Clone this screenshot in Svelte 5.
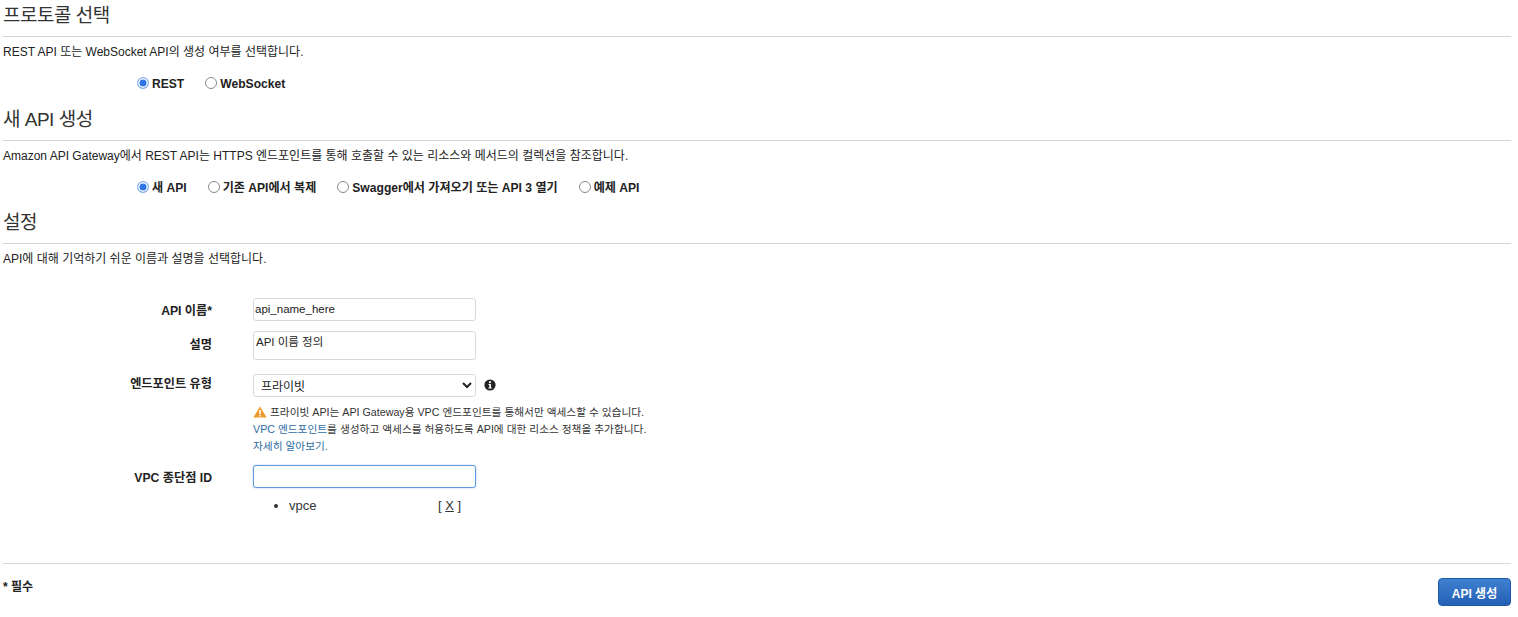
<script>
  let protocol = $state('rest');
  let apiMode = $state('new');
  let apiName = $state('api_name_here');
  let description = $state('API 이름 정의');
  let endpointType = $state('private');
  let vpcId = $state('');
  let vpcList = $state(['vpce']);

  const protocols = [
    { id: 'rest', label: 'REST' },
    { id: 'ws', label: 'WebSocket' }
  ];
  const apiModes = [
    { id: 'new', label: '새 API' },
    { id: 'clone', label: '기존 API에서 복제' },
    { id: 'swagger', label: 'Swagger에서 가져오기 또는 API 3 열기' },
    { id: 'example', label: '예제 API' }
  ];
</script>

<div class="page">
  <section class="sec">
    <h2>프로토콜 선택</h2>
    <p class="desc">REST API 또는 WebSocket API의 생성 여부를 선택합니다.</p>
    <div class="radios">
      {#each protocols as opt}
        <label class="radio"><input type="radio" name="protocol" value={opt.id} bind:group={protocol} />{opt.label}</label>
      {/each}
    </div>
  </section>

  <section class="sec">
    <h2>새 API 생성</h2>
    <p class="desc">Amazon API Gateway에서 REST API는 HTTPS 엔드포인트를 통해 호출할 수 있는 리소스와 메서드의 컬렉션을 참조합니다.</p>
    <div class="radios">
      {#each apiModes as opt}
        <label class="radio"><input type="radio" name="mode" value={opt.id} bind:group={apiMode} />{opt.label}</label>
      {/each}
    </div>
  </section>

  <section class="sec">
    <h2>설정</h2>
    <p class="desc">API에 대해 기억하기 쉬운 이름과 설명을 선택합니다.</p>
  </section>

  <div class="form">
    <div class="row r-name">
      <span class="lbl">API 이름*</span>
      <input class="field" type="text" bind:value={apiName} />
    </div>
    <div class="row r-desc">
      <span class="lbl">설명</span>
      <textarea class="field area" bind:value={description}></textarea>
    </div>
    <div class="row r-type">
      <span class="lbl">엔드포인트 유형</span>
      <div class="control">
        <div class="select-line">
          <select class="field sel" bind:value={endpointType}>
            <option value="private">프라이빗</option>
            <option value="regional">지역</option>
          </select>
          <svg class="info" viewBox="0 0 12 12" width="12" height="12" aria-hidden="true">
            <circle cx="6" cy="6" r="5.6" fill="#222" />
            <circle cx="6" cy="3.2" r="1.1" fill="#fff" />
            <path d="M4.5 5h2.5v3.6h.8v1H4.4v-1h.9V6h-.8z" fill="#fff" />
          </svg>
        </div>
        <div class="note">
          <div>
            <svg class="warn" viewBox="0 0 14 12" width="14" height="12" aria-hidden="true">
              <path d="M7 .4 13.7 11.6H.3z" fill="#eb9a2c" />
              <rect x="6.2" y="4" width="1.6" height="4.2" fill="#fff" />
              <rect x="6.2" y="9" width="1.6" height="1.5" fill="#fff" />
            </svg>
            프라이빗 API는 API Gateway용 VPC 엔드포인트를 통해서만 액세스할 수 있습니다.
          </div>
          <div><a href="#vpc">VPC 엔드포인트</a>를 생성하고 액세스를 허용하도록 API에 대한 리소스 정책을 추가합니다.</div>
          <div><a href="#more">자세히 알아보기.</a></div>
        </div>
      </div>
    </div>
    <div class="row r-vpc">
      <span class="lbl">VPC 종단점 ID</span>
      <div class="control">
        <input class="field focus" type="text" bind:value={vpcId} />
        <ul class="vpc-list">
          {#each vpcList as item}
            <li><span class="vpc-name">{item}</span><span class="remove">[ <u>X</u> ]</span></li>
          {/each}
        </ul>
      </div>
    </div>
  </div>

  <footer class="foot">
    <span class="required">* 필수</span>
    <button class="create" type="button">API 생성</button>
  </footer>
</div>

<style>
  :global(body) {
    margin: 0;
    background: #fff;
  }

  .page {
    padding: 0 7px 0 3px;
    font-family: "Liberation Sans", "Noto Sans CJK KR", sans-serif;
    font-size: 12px;
    color: #222;
  }

  .sec {
    height: 103.5px;
  }

  .sec:last-of-type {
    height: auto;
  }

  h2 {
    margin: 0;
    height: 36px;
    line-height: 31px;
    font-size: 19px;
    letter-spacing: -0.5px;
    font-weight: 400;
    color: #333;
    border-bottom: 1px solid #d5d5d5;
    box-sizing: content-box;
  }

  .desc {
    margin: 0;
    padding-top: 7px;
    line-height: 16px;
  }

  .radios {
    display: flex;
    gap: 21px;
    margin-top: 15px;
    padding-left: 134px;
    line-height: 18px;
    font-size: 12.1px;
  }

  .radio {
    display: flex;
    align-items: center;
    gap: 3px;
    font-weight: 700;
    color: #222;
  }

  .radio input {
    appearance: none;
    margin: 0 0 2px;
    width: 12px;
    height: 12px;
    border: 1px solid #8a8a8a;
    border-radius: 50%;
    background: #fff;
    box-sizing: border-box;
  }

  .radio input:checked {
    border: 1.5px solid #8db4ee;
    background: #2f74e6;
    box-shadow: inset 0 0 0 1.5px #fff;
  }

  .form {
    margin-top: 31px;
  }

  .row {
    display: grid;
    grid-template-columns: 209px 223px;
    column-gap: 41px;
    align-items: start;
  }

  .r-name {
    height: 33px;
  }

  .r-desc {
    height: 43px;
  }

  .r-type {
    height: 91px;
  }

  .lbl {
    font-size: 12.2px;
    font-weight: 700;
    text-align: right;
    line-height: 16px;
    padding-top: 5px;
    white-space: nowrap;
  }

  .r-desc .lbl {
    padding-top: 6px;
  }

  .r-type .lbl {
    padding-top: 2px;
  }

  .field {
    display: block;
    width: 223px;
    box-sizing: border-box;
    border: 1px solid #d9d9d9;
    border-radius: 3px;
    background: #fff;
    font: inherit;
    font-size: 11.5px;
    color: #222;
    outline: none;
  }

  input.field {
    height: 23px;
    padding: 0 1px 1px;
  }

  .area {
    height: 29px;
    padding: 1px 2px;
    resize: none;
  }

  .sel {
    height: 23px;
    padding: 2px 3px 0;
    font-size: 12px;
  }

  .focus {
    border-color: #5f9ae0;
    box-shadow: 0 0 2px #a9c8ee;
  }

  .control {
    min-width: 0;
  }

  .select-line {
    position: relative;
  }

  .info {
    position: absolute;
    left: 231px;
    top: 5px;
  }

  .note {
    margin-top: 7px;
    width: 420px;
    font-size: 10.7px;
    line-height: 17px;
    color: #333;
    white-space: nowrap;
  }

  .warn {
    vertical-align: -2px;
  }

  a {
    color: #2e6da4;
    text-decoration: none;
  }

  .vpc-list {
    margin: 9px 0 0;
    padding: 0 0 0 36px;
    font-size: 13px;
    line-height: 18px;
    color: #333;
  }

  .vpc-name {
    display: inline-block;
    width: 149px;
  }

  .remove {
    white-space: pre;
  }

  .foot {
    display: flex;
    justify-content: space-between;
    align-items: flex-start;
    margin-top: 48px;
    border-top: 1px solid #d9d9d9;
    padding-top: 14px;
  }

  .required {
    font-size: 12px;
    font-weight: 700;
    line-height: 16px;
    margin-top: 1px;
  }

  .create {
    width: 73px;
    height: 28px;
    border: 1px solid #1f5aa8;
    border-radius: 4px;
    background: linear-gradient(#3f80d0, #2460b4);
    color: #fff;
    font: inherit;
    font-weight: 700;
    font-size: 12px;
    padding: 0;
  }
</style>
